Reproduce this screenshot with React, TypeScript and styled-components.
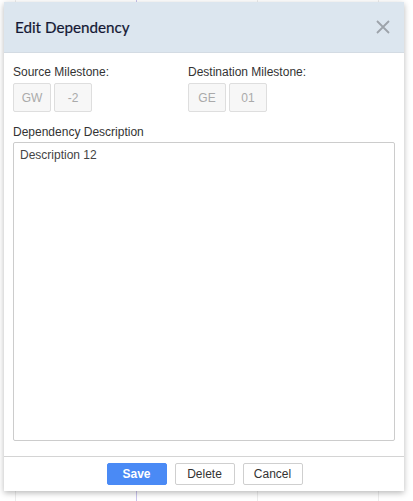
import React, { useState } from 'react'
import styled, { createGlobalStyle } from 'styled-components'

const GlobalStyle = createGlobalStyle`
  html, body {
    margin: 0;
    padding: 0;
    background: #fff;
  }
  body {
    font-family: "Liberation Sans", Arial, sans-serif;
    font-size: 12px;
    color: #333;
  }
`

const Page = styled.div`
  position: relative;
  width: 413px;
  height: 501px;
  overflow: hidden;
`

// schedule grid underneath the dialog
const Grid = styled.div`
  display: flex;
  height: 100%;
  padding-left: 15px;
`

const GridColumn = styled.div<{ $accent?: boolean }>`
  width: 120px;
  flex: none;
  border-left: 1px solid ${({ $accent }) => ($accent ? '#c9c3ec' : '#ececec')};
`

const Overlay = styled.div`
  position: absolute;
  left: 4px;
  top: 2px;
  width: 400px;
  height: 489px;
  display: flex;
  flex-direction: column;
  background: #fff;
  box-shadow: 0 2px 6px rgba(0, 0, 0, 0.28);
`

const Header = styled.div`
  height: 50px;
  flex: none;
  display: flex;
  align-items: center;
  justify-content: space-between;
  padding: 0 13px 0 11px;
  background: #dce6ef;
  border-bottom: 1px solid #d3dbe3;
`

const Title = styled.h2`
  margin: 0;
  font-family: Lato, "Noto Sans", sans-serif;
  font-weight: 400;
  font-size: 15.2px;
  color: #141834;
  -webkit-text-stroke: 0.2px #141834;
`

const CloseButton = styled.button`
  border: 0;
  padding: 0;
  background: transparent;
  width: 16px;
  height: 16px;
  display: flex;
  align-items: center;
  justify-content: center;
  cursor: pointer;
`

const Body = styled.div`
  flex: 1;
  display: flex;
  flex-direction: column;
  padding: 12px 9px 15px 9px;
`

const MilestoneRow = styled.div`
  display: flex;
`

const MilestoneGroup = styled.div`
  width: 175px;
  display: flex;
  flex-direction: column;
  gap: 4px;
`

const FieldLabel = styled.label`
  font-size: 12px;
  line-height: 14px;
  color: #333;
`

const Chips = styled.div`
  display: flex;
  gap: 3px;
`

const Chip = styled.div`
  width: 36px;
  height: 27px;
  display: flex;
  align-items: center;
  justify-content: center;
  background: #f7f7f7;
  border: 1px solid #dedede;
  border-radius: 2px;
  color: #aaa;
  font-size: 12px;
`

const DescriptionLabel = styled(FieldLabel)`
  margin-top: 13px;
  margin-bottom: 3px;
`

const DescriptionInput = styled.textarea`
  flex: 1;
  resize: none;
  margin: 0;
  padding: 5px 6px;
  border: 1px solid #ccc;
  border-radius: 2px;
  font-family: "Liberation Sans", Arial, sans-serif;
  font-size: 12px;
  line-height: 14px;
  color: #444;
  outline: none;
`

const Footer = styled.div`
  flex: none;
  height: 34px;
  display: flex;
  align-items: center;
  justify-content: center;
  gap: 8px;
  padding-left: 1px;
  border-top: 1px solid #d4d4d4;
`

const Button = styled.button<{ $primary?: boolean }>`
  width: 60px;
  height: 22px;
  padding: 0;
  border-radius: 2px;
  font-family: "Liberation Sans", Arial, sans-serif;
  font-size: 12px;
  cursor: pointer;
  border: 1px solid ${({ $primary }) => ($primary ? '#4a8af5' : '#cfcfcf')};
  background: ${({ $primary }) => ($primary ? '#4a8af5' : '#fff')};
  color: ${({ $primary }) => ($primary ? '#fff' : '#333')};
  font-weight: ${({ $primary }) => ($primary ? 700 : 400)};
`

const CloseIcon = () => (
  <svg width="14" height="14" viewBox="0 0 14 14">
    <path d="M1 1L13 13M13 1L1 13" stroke="#9da3aa" strokeWidth="1.8" />
  </svg>
)

const App: React.FC = () => {
  const [description, setDescription] = useState('Description 12')

  return (
    <>
      <GlobalStyle />
      <Page>
        <Grid>
          <GridColumn />
          <GridColumn $accent />
          <GridColumn />
          <GridColumn />
        </Grid>
        <Overlay>
          <Header>
            <Title>Edit Dependency</Title>
            <CloseButton aria-label="Close">
              <CloseIcon />
            </CloseButton>
          </Header>
          <Body>
            <MilestoneRow>
              <MilestoneGroup>
                <FieldLabel>Source Milestone:</FieldLabel>
                <Chips>
                  <Chip>GW</Chip>
                  <Chip>-2</Chip>
                </Chips>
              </MilestoneGroup>
              <MilestoneGroup>
                <FieldLabel>Destination Milestone:</FieldLabel>
                <Chips>
                  <Chip>GE</Chip>
                  <Chip>01</Chip>
                </Chips>
              </MilestoneGroup>
            </MilestoneRow>
            <DescriptionLabel>Dependency Description</DescriptionLabel>
            <DescriptionInput value={description} onChange={(e) => setDescription(e.target.value)} />
          </Body>
          <Footer>
            <Button $primary>Save</Button>
            <Button>Delete</Button>
            <Button>Cancel</Button>
          </Footer>
        </Overlay>
      </Page>
    </>
  )
}

export default App
